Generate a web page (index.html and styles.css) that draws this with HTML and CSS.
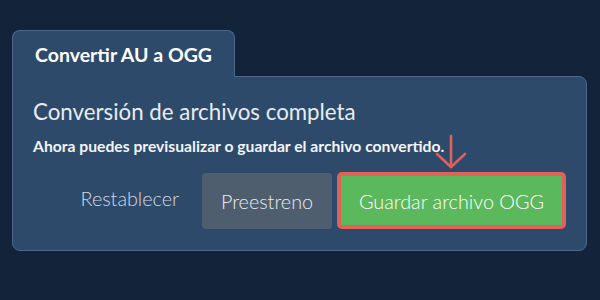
FILE: index.html
```html
<!DOCTYPE html>
<html lang="es">
<head>
    <meta charset="UTF-8">
    <meta name="viewport" content="width=device-width, initial-scale=1.0">
    <title>Convertir AU a OGG</title>
    <link rel="stylesheet" href="styles.css">
</head>
<body>
    <div class="converter">
        <div class="tab">Convertir AU a OGG</div>

        <div class="card">
            <h1 class="card-title">Conversión de archivos completa</h1>
            <p class="card-text">Ahora puedes previsualizar o guardar el archivo convertido.</p>

            <div class="actions">
                <button type="button" class="btn btn-link">Restablecer</button>
                <button type="button" class="btn btn-secondary">Preestreno</button>
                <div class="highlight">
                    <svg class="hint-arrow" width="32" height="36" viewBox="0 0 32 36" fill="none" stroke="#e0605a" stroke-width="2.6" stroke-linecap="round" stroke-linejoin="round">
                        <path d="M16 2 V33"/>
                        <path d="M2 20 L16 33 L30 20"/>
                    </svg>
                    <button type="button" class="btn btn-success">Guardar archivo OGG</button>
                </div>
            </div>
        </div>
    </div>
</body>
</html>
```

FILE: styles.css
```css
:root {
    --page-bg: #12233a;
    --card-bg: #2e4a6a;
    --card-border: #4d6889;
    --text-light: #e8ecf0;
    --muted: #d3dae2;
    --grey-btn: #4e5e6f;
    --green: #5cb85c;
    --red: #e0605a;
}

body {
    font-family: 'Lato', 'Open Sans', sans-serif;
    margin: 0;
    padding: 30px 13px 0 12px;
    background-color: var(--page-bg);
    color: var(--text-light);
}

.converter {
    display: flex;
    flex-direction: column;
    align-items: flex-start;
}

.tab {
    position: relative;
    z-index: 1;
    box-sizing: border-box;
    width: 223px;
    height: 47px;
    padding: 0 0 0 22px;
    background: var(--card-bg);
    border: 1px solid var(--card-border);
    border-bottom: none;
    border-radius: 8px 8px 0 0;
    font-size: 19.5px;
    font-weight: 700;
    line-height: 47px;
    color: #ffffff;
}

.card {
    box-sizing: border-box;
    align-self: stretch;
    margin-top: -1px;
    height: 175px;
    padding: 21px 20px 0 20px;
    background: var(--card-bg);
    border: 1px solid var(--card-border);
    border-radius: 0 8px 8px 8px;
}

.card-title {
    margin: 0;
    font-size: 22.3px;
    font-weight: 400;
    line-height: 28px;
    color: var(--text-light);
}

.card-text {
    margin: 10px 0 0 0;
    font-size: 15.7px;
    font-weight: 700;
    line-height: 20px;
    color: #f2f4f6;
}

.actions {
    display: flex;
    justify-content: flex-end;
    align-items: center;
    gap: 5px;
    margin-top: 16px;
}

.btn {
    box-sizing: border-box;
    height: 56px;
    border: none;
    border-radius: 4px;
    font-family: inherit;
    font-size: 19.8px;
    font-weight: 300;
    cursor: pointer;
}

.btn-link {
    background: transparent;
    color: var(--muted);
    padding: 0 18px 6px 0;
}

.btn-secondary {
    width: 130px;
    background: var(--grey-btn);
    color: var(--text-light);
    padding: 0;
}

.highlight {
    position: relative;
}

.btn-success {
    width: 229px;
    height: 57px;
    background: var(--green);
    color: #ffffff;
    border: 4px solid var(--red);
    border-radius: 5px;
    padding: 0;
}

.hint-arrow {
    position: absolute;
    top: -38px;
    left: 98px;
}
```
